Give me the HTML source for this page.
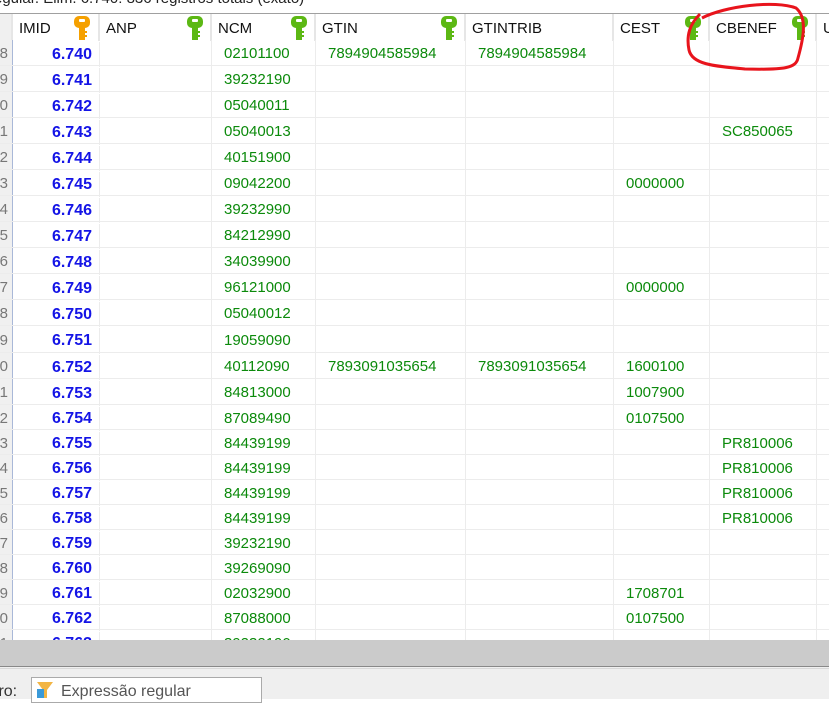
<!DOCTYPE html>
<html><head><meta charset="utf-8"><style>
*{margin:0;padding:0;box-sizing:border-box}
body{width:829px;height:699px;overflow:hidden;background:#fff;font-family:"Liberation Sans","DejaVu Sans",sans-serif;position:relative}
.a{position:absolute}
.cap{left:-6px;top:-10px;font-size:15px;color:#222;white-space:nowrap}
.hdr{top:13px;height:27px;left:0;width:829px;border-top:1px solid #a0a0a0;background:#fff}
.hc{position:absolute;top:0;height:27px;border-right:2px solid #e6e6e6;font-size:15px;color:#111;padding:6px 0 0 6px}
.row{position:absolute;left:0;width:829px;border-bottom:1px solid #ececec}
.c{position:absolute;top:2px;height:100%;border-right:1px solid #ececec;font-size:15px;color:#0b8a0b;display:flex;align-items:center}
.rn{left:0;top:0;width:13px;background:#f0f0f0;border-right:1px solid #a9b8d8;color:#777;justify-content:flex-end;overflow:hidden;padding-right:4px;padding-top:2px}
.id{left:13px;width:87px;color:#1414e6;font-weight:bold;justify-content:flex-end;padding-right:7px;font-size:16px}
.key{position:absolute;top:1px}
</style></head><body>
<div class="a cap">egular. Elim. 6.740: 836 registros totais (exato)</div>
<div class="a hdr">
 <div class="hc" style="left:0;width:13px;background:#f0f0f0"></div>
 <div class="hc" style="left:13px;width:87px">IMID</div>
 <div class="hc" style="left:100px;width:112px">ANP</div>
 <div class="hc" style="left:212px;width:104px">NCM</div>
 <div class="hc" style="left:316px;width:150px">GTIN</div>
 <div class="hc" style="left:466px;width:148px">GTINTRIB</div>
 <div class="hc" style="left:614px;width:96px">CEST</div>
 <div class="hc" style="left:710px;width:107px">CBENEF</div>
 <div class="hc" style="left:817px;width:20px">U</div>
 <svg class="key" style="left:73px" width="18" height="26" viewBox="0 0 18 26"><rect x="1" y="1" width="16" height="12" rx="5" fill="#f5a000"/><rect x="6" y="4" width="6" height="3" rx="1" fill="#fff"/><rect x="6" y="11" width="6" height="14" fill="#f5a000"/><rect x="11" y="16" width="3" height="2" fill="#f5a000"/><rect x="11" y="20" width="3" height="2" fill="#f5a000"/></svg>
 <svg class="key" style="left:186px" width="18" height="26" viewBox="0 0 18 26"><rect x="1" y="1" width="16" height="12" rx="5" fill="#5cb814"/><rect x="6" y="4" width="6" height="3" rx="1" fill="#fff"/><rect x="6" y="11" width="6" height="14" fill="#5cb814"/><rect x="11" y="16" width="3" height="2" fill="#5cb814"/><rect x="11" y="20" width="3" height="2" fill="#5cb814"/></svg>
 <svg class="key" style="left:290px" width="18" height="26" viewBox="0 0 18 26"><rect x="1" y="1" width="16" height="12" rx="5" fill="#5cb814"/><rect x="6" y="4" width="6" height="3" rx="1" fill="#fff"/><rect x="6" y="11" width="6" height="14" fill="#5cb814"/><rect x="11" y="16" width="3" height="2" fill="#5cb814"/><rect x="11" y="20" width="3" height="2" fill="#5cb814"/></svg>
 <svg class="key" style="left:440px" width="18" height="26" viewBox="0 0 18 26"><rect x="1" y="1" width="16" height="12" rx="5" fill="#5cb814"/><rect x="6" y="4" width="6" height="3" rx="1" fill="#fff"/><rect x="6" y="11" width="6" height="14" fill="#5cb814"/><rect x="11" y="16" width="3" height="2" fill="#5cb814"/><rect x="11" y="20" width="3" height="2" fill="#5cb814"/></svg>
 <svg class="key" style="left:684px" width="18" height="26" viewBox="0 0 18 26"><rect x="1" y="1" width="16" height="12" rx="5" fill="#5cb814"/><rect x="6" y="4" width="6" height="3" rx="1" fill="#fff"/><rect x="6" y="11" width="6" height="14" fill="#5cb814"/><rect x="11" y="16" width="3" height="2" fill="#5cb814"/><rect x="11" y="20" width="3" height="2" fill="#5cb814"/></svg>
 <svg class="key" style="left:791px" width="18" height="26" viewBox="0 0 18 26"><rect x="1" y="1" width="16" height="12" rx="5" fill="#5cb814"/><rect x="6" y="4" width="6" height="3" rx="1" fill="#fff"/><rect x="6" y="11" width="6" height="14" fill="#5cb814"/><rect x="11" y="16" width="3" height="2" fill="#5cb814"/><rect x="11" y="20" width="3" height="2" fill="#5cb814"/></svg>
</div>
<div id="g"></div>
<script>
var d=[["8","6.740","02101100","7894904585984","7894904585984","",""],["9","6.741","39232190","","","",""],["0","6.742","05040011","","","",""],["1","6.743","05040013","","","","SC850065"],["2","6.744","40151900","","","",""],["3","6.745","09042200","","","0000000",""],["4","6.746","39232990","","","",""],["5","6.747","84212990","","","",""],["6","6.748","34039900","","","",""],["7","6.749","96121000","","","0000000",""],["8","6.750","05040012","","","",""],["9","6.751","19059090","","","",""],["0","6.752","40112090","7893091035654","7893091035654","1600100",""],["1","6.753","84813000","","","1007900",""],["2","6.754","87089490","","","0107500",""],["3","6.755","84439199","","","","PR810006"],["4","6.756","84439199","","","","PR810006"],["5","6.757","84439199","","","","PR810006"],["6","6.758","84439199","","","","PR810006"],["7","6.759","39232190","","","",""],["8","6.760","39269090","","","",""],["9","6.761","02032900","","","1708701",""],["0","6.762","87088000","","","0107500",""],["1","6.763","39232190","","","",""]];
var tops=[40,66,92,118,144,170,196,222,248,274,300,326,353,379,405,430,455,480,505,530,555,580,605,630,655];
var cols=[[100,112],[212,104],[316,150],[466,148],[614,96],[710,107],[817,20]];
var h="";
for(var i=0;i<d.length;i++){var r=d[i],t=tops[i],ht=tops[i+1]-t;
h+='<div class="row" style="top:'+t+'px;height:'+ht+'px"><div class="c rn">'+r[0]+'</div><div class="c id">'+r[1]+'</div>';
var v=["",r[2],r[3],r[4],r[5],r[6],""];
for(var j=0;j<7;j++)h+='<div class="c" style="left:'+cols[j][0]+'px;width:'+cols[j][1]+'px;padding-left:12px;top:0;padding-top:2px">'+v[j]+'</div>';
h+='</div>';}
document.getElementById("g").innerHTML=h;
</script>
<div class="a" style="left:0;top:640px;width:829px;height:26px;background:#cbcbcb"></div>
<div class="a" style="left:0;top:666px;width:829px;height:33px;background:#efefef;border-top:1px solid #888"></div>
<div class="a" style="left:0;top:668px;width:829px;height:1px;background:#d8d8d8"></div>
<div class="a" style="left:-6px;top:683px;font-size:16px;color:#333">tro:</div>
<div class="a" style="left:31px;top:677px;width:231px;height:26px;background:#fff;border:1px solid #aaa"></div>
<svg class="a" style="left:35px;top:680px" width="20" height="20"><polygon points="2,2 18,2 12,10 12,18 8,18 8,10" fill="#f2b544"/><rect x="2" y="9" width="7" height="9" fill="#3a9ad9"/></svg>
<div class="a" style="left:61px;top:683px;font-size:16px;color:#555">Expressão regular</div>
<svg class="a" style="left:0;top:0" width="829" height="100"><path d="M702 18 C725 6 775 0 796 8 C808 18 803 40 798 58 C796 68 785 70 745 69 C712 66 692 64 689 50 C686 35 690 24 700 14" fill="none" stroke="#e8141c" stroke-width="3"/></svg>
</body></html>
